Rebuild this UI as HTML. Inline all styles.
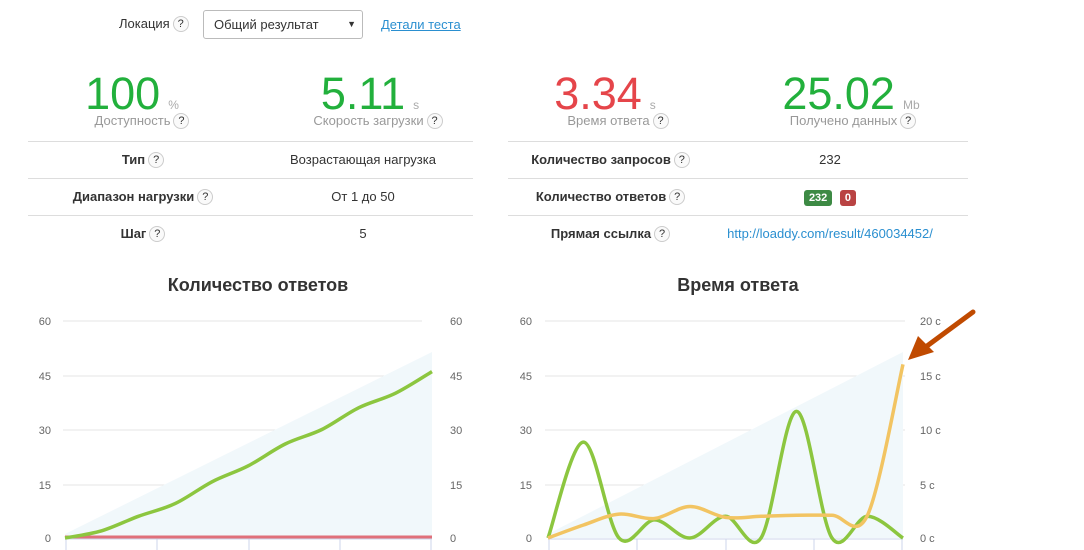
<!DOCTYPE html>
<html><head><meta charset="utf-8"><style>
*{margin:0;padding:0;box-sizing:border-box}
body{width:1084px;height:550px;overflow:hidden;background:#fff;font-family:"Liberation Sans",sans-serif;color:#333;position:relative}
.a{position:absolute;white-space:nowrap}
.q{display:inline-block;width:16px;height:16px;border:1px solid #ccc;border-radius:50%;font-size:11px;line-height:14px;text-align:center;color:#333;vertical-align:middle;margin-left:3px;margin-top:-2px;background:#fafafa;font-weight:normal}
.big{font-size:45px;line-height:44px}
.unit{font-size:12px;color:#aaa;margin-left:8px}
.lbl{font-size:13px;color:#999;line-height:18px}
.hl{position:absolute;height:1px;background:#ddd}
.c{text-align:center;font-size:13px;line-height:18px}
.b{font-weight:bold}
.badge{display:inline-block;color:#fff;font-size:11px;font-weight:bold;padding:2px 5px;border-radius:3px;line-height:12px}
</style></head><body>
<div class="a" style="left:119px;top:15px;font-size:13px;line-height:18px">Локация<span class="q">?</span></div>
<div class="a" style="left:203px;top:10px;width:160px;height:29px;border:1px solid #bbb;border-radius:3px;font-size:13px;line-height:27px;padding-left:10px">Общий результат<span style="position:absolute;right:6px;font-size:9px">▼</span></div>
<div class="a" style="left:381px;top:17px;font-size:13px;color:#2a8fd0;text-decoration:underline">Детали теста</div>

<div class="a" style="left:12px;top:72px;width:240px;text-align:center"><span class="big" style="color:#22b03c">100</span><span class="unit">%</span></div>
<div class="a lbl" style="left:22px;top:112px;width:240px;text-align:center">Доступность<span class="q">?</span></div>
<div class="a" style="left:250px;top:72px;width:240px;text-align:center"><span class="big" style="color:#22b03c">5.11</span><span class="unit">s</span></div>
<div class="a lbl" style="left:258px;top:112px;width:240px;text-align:center">Скорость загрузки<span class="q">?</span></div>
<div class="a" style="left:490px;top:72px;width:230px;text-align:center"><span class="big" style="color:#e5454a">3.34</span><span class="unit">s</span></div>
<div class="a lbl" style="left:503px;top:112px;width:230px;text-align:center">Время ответа<span class="q">?</span></div>
<div class="a" style="left:736px;top:72px;width:230px;text-align:center"><span class="big" style="color:#22b03c">25.02</span><span class="unit">Mb</span></div>
<div class="a lbl" style="left:738px;top:112px;width:230px;text-align:center">Получено данных<span class="q">?</span></div>

<div class="hl" style="left:28px;width:445px;top:141px"></div>
<div class="hl" style="left:28px;width:445px;top:178px"></div>
<div class="hl" style="left:28px;width:445px;top:215px"></div>
<div class="hl" style="left:508px;width:460px;top:141px"></div>
<div class="hl" style="left:508px;width:460px;top:178px"></div>
<div class="hl" style="left:508px;width:460px;top:215px"></div>

<div class="a c b" style="left:28px;width:230px;top:151px">Тип<span class="q">?</span></div>
<div class="a c" style="left:248px;width:230px;top:151px">Возрастающая нагрузка</div>
<div class="a c b" style="left:28px;width:230px;top:188px">Диапазон нагрузки<span class="q">?</span></div>
<div class="a c" style="left:248px;width:230px;top:188px">От 1 до 50</div>
<div class="a c b" style="left:28px;width:230px;top:225px">Шаг<span class="q">?</span></div>
<div class="a c" style="left:248px;width:230px;top:225px">5</div>

<div class="a c b" style="left:508px;width:205px;top:151px">Количество запросов<span class="q">?</span></div>
<div class="a c" style="left:725px;width:210px;top:151px">232</div>
<div class="a c b" style="left:508px;width:205px;top:188px">Количество ответов<span class="q">?</span></div>
<div class="a c" style="left:725px;width:210px;top:188px"><span class="badge" style="background:#3d8a44">232</span> <span class="badge" style="background:#b94343;margin-left:4px">0</span></div>
<div class="a c b" style="left:508px;width:205px;top:225px">Прямая ссылка<span class="q">?</span></div>
<div class="a c" style="left:725px;width:210px;top:225px;color:#2a8fd0">http://loaddy.com/result/460034452/</div>

<div class="a b" style="left:128px;width:260px;top:275px;text-align:center;font-size:18px">Количество ответов</div>
<div class="a b" style="left:608px;width:260px;top:275px;text-align:center;font-size:18px">Время ответа</div>

<svg class="a" style="left:0;top:0" width="1084" height="550" font-family="Liberation Sans" font-size="11" fill="#666">
<g stroke="#e6e6e6">
<line x1="63" x2="422" y1="321" y2="321"/><line x1="63" x2="422" y1="376" y2="376"/><line x1="63" x2="422" y1="430" y2="430"/><line x1="63" x2="422" y1="485" y2="485"/>
<line x1="545" x2="905" y1="321" y2="321"/><line x1="545" x2="905" y1="376" y2="376"/><line x1="545" x2="905" y1="430" y2="430"/><line x1="545" x2="905" y1="485" y2="485"/>
</g>
<polygon points="65,538 65,534 432,352 432,538" fill="#f1f8fb"/>
<polygon points="548,538 548,534 903,352 903,538" fill="#f1f8fb"/>
<g stroke="#ccd6eb"><line x1="65" x2="432" y1="539" y2="539"/><line x1="548" x2="903" y1="539" y2="539"/>
<line x1="66" x2="66" y1="539" y2="550"/><line x1="157" x2="157" y1="539" y2="550"/><line x1="249" x2="249" y1="539" y2="550"/><line x1="340" x2="340" y1="539" y2="550"/><line x1="431" x2="431" y1="539" y2="550"/>
<line x1="549" x2="549" y1="539" y2="550"/><line x1="637" x2="637" y1="539" y2="550"/><line x1="726" x2="726" y1="539" y2="550"/><line x1="814" x2="814" y1="539" y2="550"/><line x1="902" x2="902" y1="539" y2="550"/></g>
<g text-anchor="end"><text x="51" y="325">60</text><text x="51" y="380">45</text><text x="51" y="434">30</text><text x="51" y="489">15</text><text x="51" y="542">0</text>
<text x="532" y="325">60</text><text x="532" y="380">45</text><text x="532" y="434">30</text><text x="532" y="489">15</text><text x="532" y="542">0</text></g>
<text x="450" y="325">60</text><text x="450" y="380">45</text><text x="450" y="434">30</text><text x="450" y="489">15</text><text x="450" y="542">0</text>
<text x="920" y="325">20 с</text><text x="920" y="380">15 с</text><text x="920" y="434">10 с</text><text x="920" y="489">5 с</text><text x="920" y="542">0 с</text>
<line x1="65" x2="432" y1="537" y2="537" stroke="#e0707a" stroke-width="3"/>
<path id="g1" fill="none" stroke="#8cc63f" stroke-width="3.5"/>
<path id="g2" fill="none" stroke="#8cc63f" stroke-width="3.5"/>
<path id="y2" fill="none" stroke="#f2c462" stroke-width="3.5"/>
<path d="M973 312 L927 346" stroke="#c04a00" stroke-width="5" stroke-linecap="round"/>
<polygon points="908,360 918,336 934,352" fill="#c04a00"/>
</svg>
<script>
function cr(xs,ys){var d="M"+xs[0]+" "+ys[0];for(var i=0;i<xs.length-1;i++){var p0=i?i-1:0,p3=i+2<xs.length?i+2:i+1;var c1x=xs[i]+(xs[i+1]-xs[p0])/6,c1y=ys[i]+(ys[i+1]-ys[p0])/6,c2x=xs[i+1]-(xs[p3]-xs[i])/6,c2y=ys[i+1]-(ys[p3]-ys[i])/6;d+=" C"+c1x.toFixed(1)+" "+c1y.toFixed(1)+" "+c2x.toFixed(1)+" "+c2y.toFixed(1)+" "+xs[i+1].toFixed(1)+" "+ys[i+1].toFixed(1);}return d;}
var k=3.617;
var x1=[],y1=[],v1=[0,2,6,9.5,15.5,20,26,30,36,40,46];
for(var i=0;i<11;i++){x1.push(65+i*36.7);y1.push(538-v1[i]*k);}
document.getElementById("g1").setAttribute("d",cr(x1,y1));
var x2=[],yg=[],yy=[],v2=[0,26.5,0,5,0,6,0,35,0,6,0],s=[0,1.2,2.2,1.8,2.9,1.9,2,2.1,2.1,2.1,16];
for(i=0;i<11;i++){x2.push(548+i*35.5);yg.push(538-v2[i]*k);yy.push(538-s[i]*10.85);}
document.getElementById("g2").setAttribute("d",cr(x2,yg));
document.getElementById("y2").setAttribute("d",cr(x2,yy));
</script>
</body></html>
